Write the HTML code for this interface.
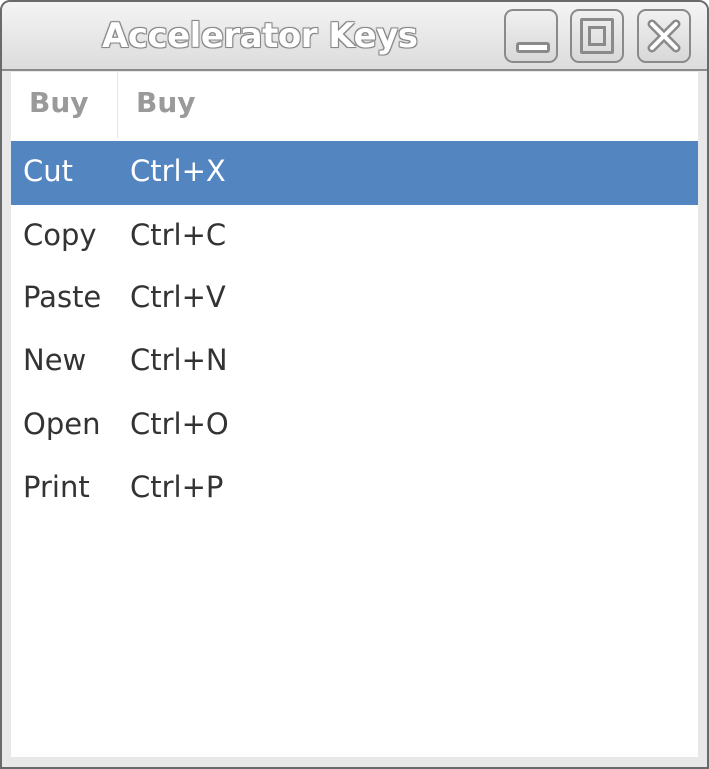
<!DOCTYPE html>
<html><head><style>
body{margin:0;width:709px;height:769px;background:#fff;overflow:hidden;font-family:"DejaVu Sans","Liberation Sans",sans-serif}
.win{position:absolute;left:0;top:0;width:705px;height:765px;border:2px solid #6a6a6a;border-radius:10px 10px 0 0;background:#e8e8e8}
.title{position:absolute;left:0;top:0;width:705px;height:67px;background:linear-gradient(#f4f4f4,#dcdcdc);border-bottom:2px solid #8a8a8a;border-radius:8px 8px 0 0}
.tt{position:absolute;left:100px;top:14px;font-size:34px;font-weight:bold;color:#fff;letter-spacing:-0.5px;text-shadow:-1px -1px 0 #888,1px -1px 0 #888,-1px 1px 0 #888,1px 1px 0 #888,0 0 2px #777}
.btn{position:absolute;top:7px;width:50px;height:50px;border:2px solid #8a8a8a;border-radius:9px;background:linear-gradient(#f0f0f0,#d8d8d8)}
.content{position:absolute;left:9px;top:70px;width:687px;height:685px;background:#fff}
.hdr{position:absolute;top:14px;font-size:28px;font-weight:bold;color:#9a9a9a}
.div{position:absolute;left:106px;top:0;width:1px;height:66px;background:#e4e4e4}
.sel{position:absolute;left:0;top:69px;width:687px;height:64px;background:#5385c1}
.r{position:absolute;font-size:29px;color:#333}
</style></head><body>
<div class="win">
<div class="title"><div class="tt">Accelerator Keys</div>
<div class="btn" style="left:502px"><div style="position:absolute;left:10px;top:31px;width:28px;height:5px;border:3px solid #8a8a8a;border-radius:3px;background:#fff"></div></div>
<div class="btn" style="left:568px"><div style="position:absolute;left:8px;top:7px;width:28px;height:30px;border:3px solid #8a8a8a;border-radius:2px"></div><div style="position:absolute;left:16px;top:15px;width:12px;height:14px;border:3px solid #8a8a8a"></div></div>
<div class="btn" style="left:635px"><svg width="50" height="50" style="position:absolute;left:0;top:0"><path d="M13 13L37 37M37 13L13 37" stroke="#8a8a8a" stroke-width="9" stroke-linecap="round"/><path d="M13 13L37 37M37 13L13 37" stroke="#fff" stroke-width="4" stroke-linecap="round"/></svg></div>
</div>
<div class="content">
<div class="div"></div>
<div class="hdr" style="left:18px">Buy</div>
<div class="hdr" style="left:125px">Buy</div>
<div class="sel"></div>
<div class="r" style="left:12px;top:82px;color:#fff">Cut</div><div class="r" style="left:119px;top:82px;color:#fff">Ctrl+X</div>
<div class="r" style="left:12px;top:146px">Copy</div><div class="r" style="left:119px;top:146px">Ctrl+C</div>
<div class="r" style="left:12px;top:208px">Paste</div><div class="r" style="left:119px;top:208px">Ctrl+V</div>
<div class="r" style="left:12px;top:271px">New</div><div class="r" style="left:119px;top:271px">Ctrl+N</div>
<div class="r" style="left:12px;top:335px">Open</div><div class="r" style="left:119px;top:335px">Ctrl+O</div>
<div class="r" style="left:12px;top:398px">Print</div><div class="r" style="left:119px;top:398px">Ctrl+P</div>
</div>
</div>
</body></html>
